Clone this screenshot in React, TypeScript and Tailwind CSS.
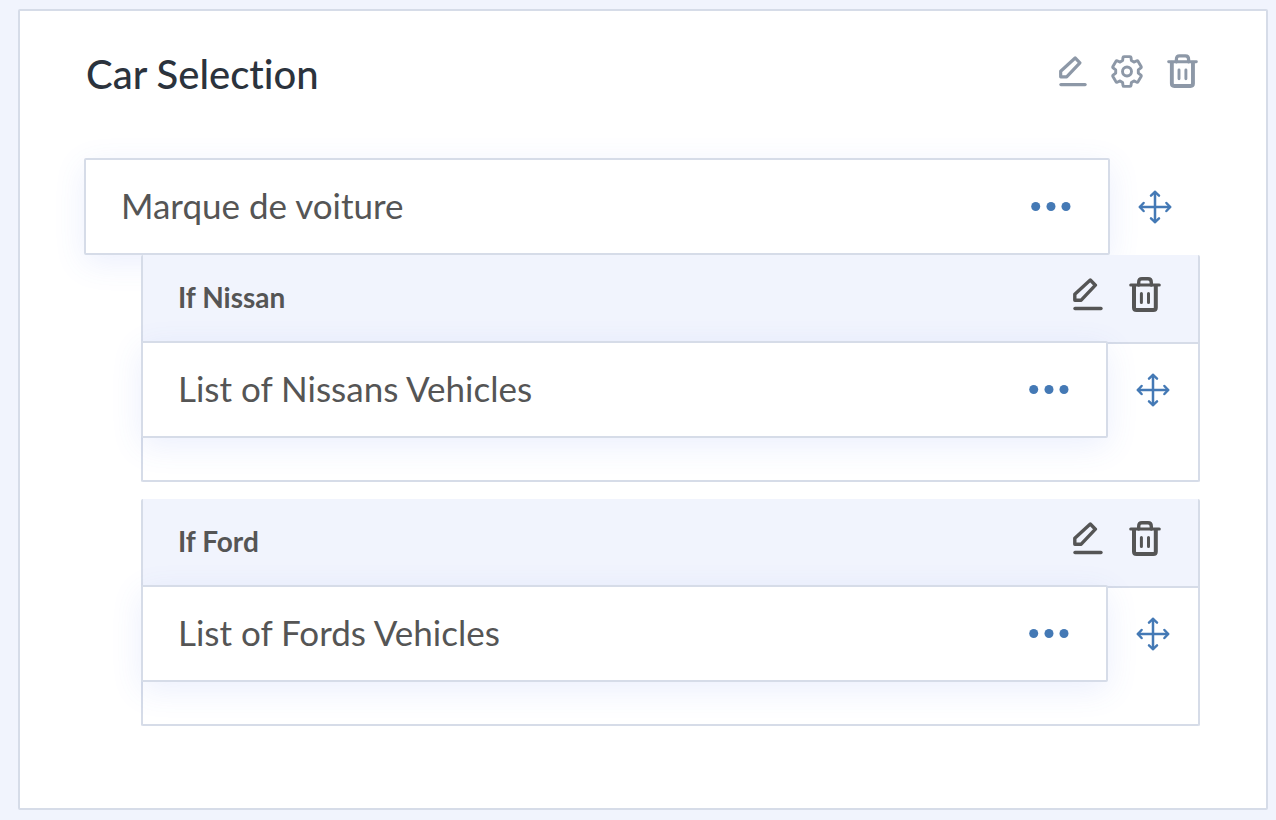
import type { ReactNode } from "react";

interface Condition {
  label: string;
  field: string;
}

const conditions: Condition[] = [
  { label: "If Nissan", field: "List of Nissans Vehicles" },
  { label: "If Ford", field: "List of Fords Vehicles" },
];

function PencilIcon({ className }: { className: string }) {
  return (
    <svg viewBox="0 0 30 33" className={className} fill="none" stroke="currentColor" strokeWidth="3.4" strokeLinecap="round" strokeLinejoin="round">
      <path d="M17.3 2 22.4 7.2 8.2 22.2H1.8V16.2Z" />
      <path d="M2 30.5H28" />
    </svg>
  );
}

function TrashIcon({ className }: { className: string }) {
  return (
    <svg viewBox="0 0 32 35" className={className} fill="none" stroke="currentColor" strokeWidth="3.4" strokeLinecap="round" strokeLinejoin="round">
      <path d="M1.7 8H30.3" strokeWidth="3" />
      <path d="M9.7 8V5.5Q9.7 1.8 13 1.8H19Q22.3 1.8 22.3 5.5V8" />
      <path d="M5 9V30.5Q5 33 7.5 33H24.3Q26.8 33 26.8 30.5V9" strokeWidth="4" />
      <path d="M12.4 16.5V25.5M19.5 16.5V25.5" strokeWidth="3" />
    </svg>
  );
}

function GearIcon() {
  return (
    <svg viewBox="0 0 32 33" className="h-[33px] w-8" fill="none" stroke="currentColor" strokeWidth="2.9" strokeLinecap="round" strokeLinejoin="round">
      <path d="M13 1.6H19Q19.9 1.6 20 2.5L20.4 5.6 22.9 7.1 25.8 5.8Q26.6 5.5 27 6.2L30.1 11.5Q30.5 12.3 29.9 12.8L27.3 14.9V18.1L29.9 20.2Q30.5 20.7 30.1 21.5L27 26.8Q26.6 27.5 25.8 27.2L22.9 25.9 20.4 27.4 20 30.5Q19.9 31.4 19 31.4H13Q12.1 31.4 12 30.5L11.6 27.4 9.1 25.9 6.2 27.2Q5.4 27.5 5 26.8L1.9 21.5Q1.5 20.7 2.1 20.2L4.7 18.1V14.9L2.1 12.8Q1.5 12.3 1.9 11.5L5 6.2Q5.4 5.5 6.2 5.8L9.1 7.1 11.6 5.6 12 2.5Q12.1 1.6 13 1.6Z" />
      <circle cx="16" cy="16.5" r="4.5" />
    </svg>
  );
}

function DotsIcon() {
  return (
    <svg viewBox="0 0 40 10" className="h-[10px] w-10" fill="currentColor">
      <circle cx="4.7" cy="4.5" r="4.5" />
      <circle cx="20" cy="4.5" r="4.5" />
      <circle cx="35" cy="4.5" r="4.5" />
    </svg>
  );
}

function MoveIcon() {
  return (
    <svg viewBox="0 0 34 34" className="size-[34px]" fill="none" stroke="currentColor" strokeWidth="2.5" strokeLinecap="round" strokeLinejoin="round">
      <path d="M17 2V32M2 17H32" />
      <path d="M13 5.6 17 1.8 21 5.6M13 28.4 17 32.2 21 28.4M5.6 13 1.8 17 5.6 21M28.4 13 32.2 17 28.4 21" />
    </svg>
  );
}

function IconButton({ label, children }: { label: string; children: ReactNode }) {
  return (
    <button type="button" aria-label={label} className="flex cursor-pointer items-center justify-center">
      {children}
    </button>
  );
}

function FieldRow({ name }: { name: string }) {
  return (
    <div className="flex text-[#4479b5]">
      <div className="flex h-[97px] flex-1 items-center justify-between rounded-xs border-2 border-[#d6dce8] bg-white pr-[37px] pl-[35px] shadow-[0_8px_32px_rgba(70,105,240,0.11)]">
        <span className="pb-1 text-[35px] leading-10 text-[#555555]">{name}</span>
        <IconButton label={`Options for ${name}`}>
          <DotsIcon />
        </IconButton>
      </div>
      <div className="flex w-[90px] items-center justify-center">
        <IconButton label={`Move ${name}`}>
          <MoveIcon />
        </IconButton>
      </div>
    </div>
  );
}

function ConditionGroup({ label, field }: Condition) {
  return (
    <section className="rounded-xs border-x-2 border-b-2 border-[#d6dce8] pb-[42px]">
      <div className="flex h-[89px] items-center justify-between border-b-2 border-[#d6dce8] bg-[#f1f4fd] pr-[37px] pl-[35px] text-[#555555]">
        <h3 className="pb-1 text-[28px] leading-8 font-bold">{label}</h3>
        <div className="flex gap-[26px] pb-2">
          <IconButton label={`Edit ${label}`}>
            <PencilIcon className="h-[33px] w-[30px]" />
          </IconButton>
          <IconButton label={`Delete ${label}`}>
            <TrashIcon className="h-[35px] w-8" />
          </IconButton>
        </div>
      </div>
      <div className="-mt-[3px] -ml-0.5">
        <FieldRow name={field} />
      </div>
    </section>
  );
}

export default function App() {
  return (
    <div className="min-h-screen bg-[#f1f4fd] pt-[9px] pr-2 pb-[10px] pl-[18px] font-['Lato',sans-serif] [font-variant-ligatures:none]">
      <main className="rounded-xs border-2 border-[#d6dce8] bg-white pt-10 pr-[66px] pb-[82px] pl-16">
        <header className="mb-[47px] flex h-[60px] items-start justify-between pl-0.5">
          <h2 className="text-[40px] leading-[46px] font-medium text-[#2b333d]">Car Selection</h2>
          <div className="flex items-center gap-6 pt-[3px] pr-0.5 text-[#8d98a7]">
            <IconButton label="Edit section">
              <PencilIcon className="h-[31px] w-7" />
            </IconButton>
            <IconButton label="Section settings">
              <GearIcon />
            </IconButton>
            <IconButton label="Delete section">
              <TrashIcon className="h-[34px] w-[31px]" />
            </IconButton>
          </div>
        </header>

        <FieldRow name="Marque de voiture" />
        <div className="flex flex-col gap-[17px] pl-[57px]">
          {conditions.map((condition) => (
            <ConditionGroup key={condition.label} {...condition} />
          ))}
        </div>
      </main>
    </div>
  );
}
